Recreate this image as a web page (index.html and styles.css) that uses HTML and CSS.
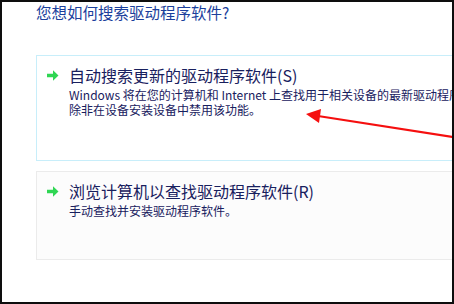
FILE: index.html
```html
<!DOCTYPE html>
<html>
<head>
    <title>更新驱动程序软件</title>
    <link rel="stylesheet" href="styles.css">
</head>
<body>
    <div class="frame">
        <h1 class="title">您想如何搜索驱动程序软件?</h1>

        <div class="option option-active">
            <svg class="go" width="12" height="11" viewBox="0 0 12 11">
                <path d="M0 3.8 H6 V0.3 L11.5 5.5 L6 10.7 V7.2 H0 Z" fill="#2fd653"/>
            </svg>
            <div class="option-text">
                <div class="option-title">自动搜索更新的驱动程序软件(S)</div>
                <div class="option-desc">Windows 将在您的计算机和 Internet 上查找用于相关设备的最新驱动程序软件，<br>除非在设备安装设备中禁用该功能。</div>
            </div>
        </div>

        <div class="option option-plain">
            <svg class="go" width="12" height="11" viewBox="0 0 12 11">
                <path d="M0 3.8 H6 V0.3 L11.5 5.5 L6 10.7 V7.2 H0 Z" fill="#2fd653"/>
            </svg>
            <div class="option-text">
                <div class="option-title">浏览计算机以查找驱动程序软件(R)</div>
                <div class="option-desc">手动查找并安装驱动程序软件。</div>
            </div>
        </div>

        <!-- red pointer drawn over the screenshot -->
        <svg class="pointer" width="454" height="304" viewBox="0 0 454 304">
            <line x1="318" y1="116" x2="456" y2="137.5" stroke="#f50f0f" stroke-width="2.2"/>
            <polygon points="306,114 321,109 319,123" fill="#f50f0f"/>
        </svg>
    </div>
</body>
</html>
```

FILE: styles.css
```css
body {
    margin: 0;
    background-color: white;
}
.frame {
    position: relative;
    width: 454px;
    height: 304px;
    box-sizing: border-box;
    border: 2px solid #0e0e0e;
    padding-left: 34px;
    overflow: hidden;
    font-family: "Noto Sans CJK SC", "Noto Sans", sans-serif;
}
.title {
    margin: 0 0 33px 0;
    font-size: 15.5px;
    line-height: 20px;
    font-weight: normal;
    color: #1b3f9c;
    white-space: nowrap;
}
.option {
    display: flex;
    width: 460px;
    box-sizing: border-box;
    padding: 10px 0 0 10px;
    margin-bottom: 10px;
}
.option-active {
    height: 106px;
    border: 1px solid #c8eefa;
    background-color: white;
}
.option-plain {
    height: 89px;
    border: 1px solid #ebebeb;
    background-color: #fcfcfc;
}
.go {
    flex: none;
    margin: 4px 10px 0 0;
}
.option-text {
    color: #18205e;
}
.option-title {
    font-size: 16px;
    line-height: 19px;
    white-space: nowrap;
}
.option-desc {
    margin-top: 2px;
    font-size: 12px;
    line-height: 15px;
    white-space: nowrap;
}
.pointer {
    position: absolute;
    left: -2px;
    top: -2px;
}
```
